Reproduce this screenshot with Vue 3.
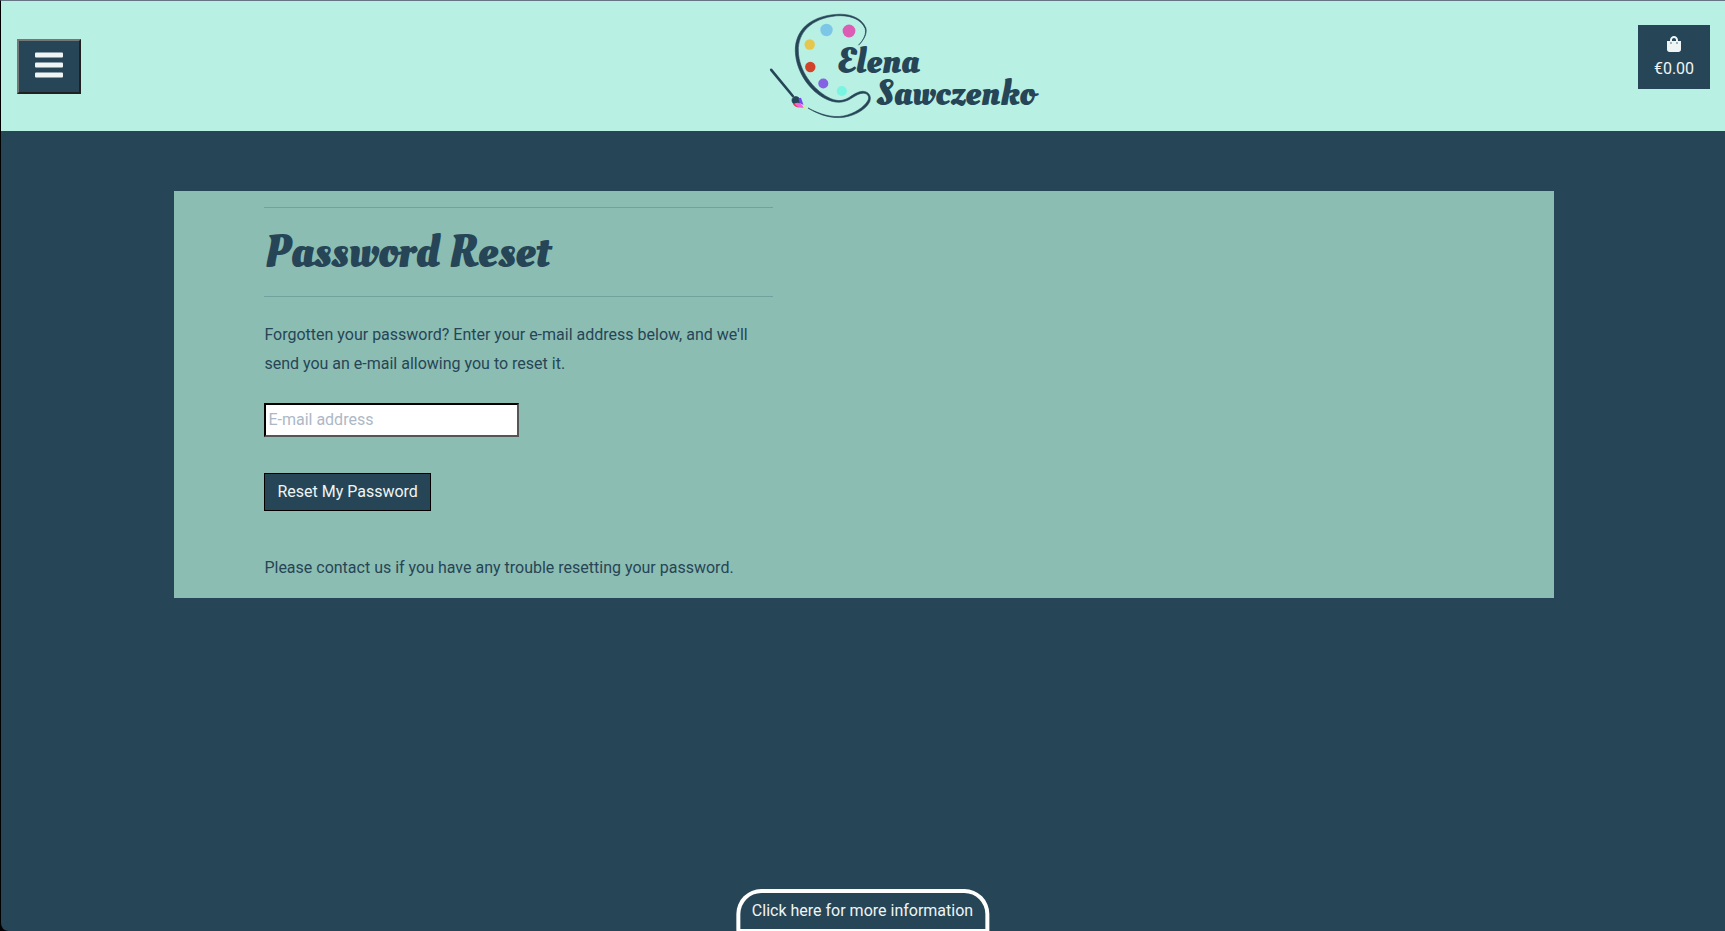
<script setup>
import { ref } from 'vue'

const email = ref('')
const total = ref('€0.00')

const paints = [
  { x: 66.5, y: 30, r: 6.2, color: '#7cc6e8' },
  { x: 89, y: 31, r: 6.4, color: '#dc5db4' },
  { x: 49.7, y: 44.5, r: 5.2, color: '#e5c74f' },
  { x: 50.3, y: 67, r: 5.2, color: '#d1432b' },
  { x: 63.3, y: 83.5, r: 5, color: '#8562e2' },
  { x: 81.8, y: 91, r: 5.1, color: '#7af5e2' },
]
</script>

<template>
  <div class="page">
    <header class="bar">
      <button class="menu" type="button" aria-label="Open menu">
        <svg width="28" height="26" viewBox="0 0 28 26" aria-hidden="true">
          <rect x="0" y="0.5" width="28" height="5" rx="1" />
          <rect x="0" y="10.5" width="28" height="5" rx="1" />
          <rect x="0" y="20.5" width="28" height="5" rx="1" />
        </svg>
      </button>

      <a class="logo" href="#" aria-label="Elena Sawczenko">
        <svg width="374" height="130" viewBox="-83 1 374 130" aria-hidden="true">
          <path class="ink" d="M98.500 45.200 C104 40 107.500 33 105.800 27.800 C101.500 17 88 13.300 76 14.400 C49 16.500 35 31 35.300 51 C36 73 51 92 66 99 C75 103.300 83 103.500 91 98.500 C96 95.500 99.500 93 103.500 93.200 C108.500 93.500 109.800 97.500 107.600 101 C104 107 95 113.500 83.500 116 C72 118 60.500 114.500 48 108 C60 115.500 72 118.800 84 117.200 C97 115.200 107 108 109.800 101.500 C112 95 107.500 91.200 102.500 91.300 C97.500 91.500 93 95 88.500 97.800 C82 101.800 75.500 101.300 68 97.300 C53 89 38.800 71 38.300 51 C37.800 33 50.500 18.500 76.500 15.800 C88.500 14.800 101 18.500 105.100 28.500 C106.600 33.500 104 39.500 98.500 45.200 Z" />
          <path class="handle" d="M11.200 69.800 L32.800 96" />
          <ellipse class="ink" cx="36.200" cy="100.800" rx="4" ry="4.600" transform="rotate(-42 36.200 100.800)" />
          <path fill="#7446f0" d="M38.500 98.500 L41 97.800 L43.500 105 L39.500 103 Z" />
          <path fill="#e33b4e" d="M32.800 103.500 L38 103.500 L39.500 107.500 Q34.500 107.500 32.800 103.500 Z" />
          <path fill="#ef62d9" d="M34.500 103.500 Q38 101.800 41 104 L43.800 107.500 Q38.500 109 34.500 103.500 Z" />
          <path fill="#e9f06a" d="M43.500 106 L47.300 107.300 L44.500 109 Z" />
          <circle v-for="p in paints" :key="p.color" :cx="p.x" :cy="p.y" :r="p.r" :fill="p.color" />
          <text class="name" x="77" y="73">Elena</text>
          <text class="name" x="116" y="105">Sawczenko</text>
        </svg>
      </a>

      <a class="bag" href="#" aria-label="Shopping bag">
        <svg width="14" height="16" viewBox="0 0 448 512" aria-hidden="true">
          <path d="M352 160v-32C352 57.420 294.579 0 224 0S96 57.420 96 128v32H0v272c0 44.183 35.817 80 80 80h288c44.183 0 80-35.817 80-80V160h-96zm-192-32c0-35.290 28.710-64 64-64s64 28.710 64 64v32H160v-32zm160 120c-13.255 0-24-10.745-24-24s10.745-24 24-24 24 10.745 24 24-10.745 24-24 24zm-192 0c-13.255 0-24-10.745-24-24s10.745-24 24-24 24 10.745 24 24-10.745 24-24 24z" />
        </svg>
        <span>{{ total }}</span>
      </a>
    </header>

    <main class="panel">
      <div class="column">
        <hr />
        <h1>Password Reset</h1>
        <hr />
        <p class="intro">Forgotten your password? Enter your e-mail address below, and we'll send you an e-mail allowing you to reset it.</p>
        <form @submit.prevent>
          <input v-model="email" type="email" placeholder="E-mail address" aria-label="E-mail address" />
          <button class="submit" type="submit">Reset My Password</button>
        </form>
        <p>Please contact us if you have any trouble resetting your password.</p>
      </div>
    </main>

    <button class="info" type="button">Click here for more information</button>
  </div>
</template>

<style>
body {
  background: #000;
}
</style>

<style scoped>
.page {
  box-sizing: border-box;
  min-height: 100vh;
  border-top: 1px solid #667583;
  border-left: 1px solid #000;
  border-bottom-left-radius: 8px;
  background: #264557;
  color: #264557;
  font: 16px/29px Roboto, sans-serif;
}

.bar {
  display: grid;
  grid-template-columns: 1fr auto 1fr;
  align-items: center;
  height: 130px;
  padding: 0 15px 0 16px;
  background: #b8f0e3;
}

.menu {
  display: flex;
  align-items: center;
  justify-content: center;
  width: 64px;
  height: 55px;
  padding: 0 0 2px;
  border: 2px solid;
  border-color: #767676 #212121 #212121 #767676;
  background: #264557;
  fill: #eff5f5;
}

.logo {
  display: block;
  height: 130px;
}

.ink {
  fill: #264557;
  stroke: #264557;
  stroke-width: 0.6;
}

.handle {
  stroke: #264557;
  stroke-width: 2.6;
  stroke-linecap: round;
}

.name {
  fill: #264557;
  font: 700 35px "Oleo Script", Lato, sans-serif;
}

.bag {
  display: flex;
  flex-direction: column;
  align-items: center;
  align-self: start;
  justify-self: end;
  box-sizing: border-box;
  min-width: 72px;
  height: 64px;
  margin-top: 24px;
  padding-top: 11px;
  background: #264557;
  color: #eff5f5;
  fill: #eff5f5;
  line-height: 34px;
  text-decoration: none;
}

.panel {
  box-sizing: border-box;
  width: 80%;
  margin: 60px 0 0 calc(10% + 1px);
  padding: 16px 90px;
  background: #8cbdb2;
}

.column {
  max-width: 509px;
}

hr {
  margin: 0;
  border: 0;
  border-top: 1px solid #72a29e;
}

h1 {
  margin: 0;
  padding: 20px 0;
  font: 700 45px/48px "Oleo Script", Lato, sans-serif;
}

p {
  margin: 0;
}

.intro {
  padding: 23px 0 25px;
}

form {
  display: flex;
  flex-direction: column;
  align-items: flex-start;
  gap: 36px;
  margin-bottom: 42px;
}

input {
  box-sizing: border-box;
  width: 255px;
  height: 34px;
  padding: 0 2px 1px;
  border: 2px solid;
  border-color: #000 #555 #555 #000;
  border-radius: 0;
  background: #fff;
  color: #264557;
  font: inherit;
}

input::placeholder {
  color: #adb8c6;
}

.submit {
  height: 38px;
  padding: 0 12px 2px;
  border: 1px solid #000;
  background: #264557;
  color: #eff5f5;
  font: inherit;
}

.info {
  position: fixed;
  bottom: 0;
  left: 50%;
  height: 42px;
  padding: 0 12px 2px;
  border: 4px solid #fff;
  border-bottom-width: 2px;
  border-radius: 25px 25px 0 0;
  background: #264557;
  color: #eff5f5;
  font: inherit;
  transform: translateX(-50%);
}
</style>
